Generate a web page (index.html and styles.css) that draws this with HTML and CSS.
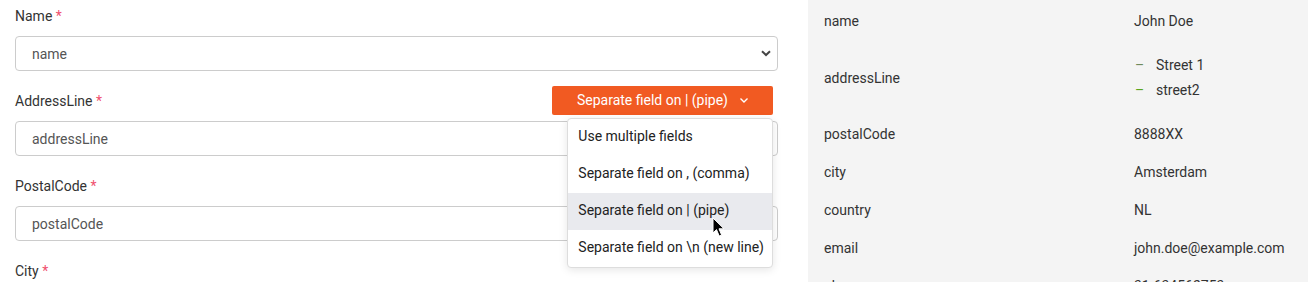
FILE: index.html
```html
<!DOCTYPE html>
<html lang="en">
<head>
    <meta charset="UTF-8">
    <meta name="viewport" content="width=device-width, initial-scale=1.0">
    <title>Address form</title>
    <link rel="stylesheet" href="styles.css">
</head>
<body>
    <div class="page">
        <form class="form-column">
            <div class="form-group">
                <div class="label-row">
                    <label for="name">Name <span class="required">*</span></label>
                </div>
                <div class="select-wrap">
                    <select id="name" class="field">
                        <option>name</option>
                    </select>
                    <svg class="select-chevron" width="10" height="7" viewBox="0 0 10 7"><path d="M1 1.2 L5 5 L9 1.2" fill="none" stroke="#444" stroke-width="2"/></svg>
                </div>
            </div>

            <div class="form-group">
                <div class="label-row">
                    <label for="addressLine">AddressLine <span class="required">*</span></label>
                    <div class="split-control">
                        <button type="button" class="split-button">
                            Separate field on | (pipe)
                            <svg width="10" height="7" viewBox="0 0 10 7"><path d="M1.5 1.5 L5 5 L8.5 1.5" fill="none" stroke="#fff" stroke-width="1.4"/></svg>
                        </button>
                        <ul class="split-menu">
                            <li>Use multiple fields</li>
                            <li>Separate field on , (comma)</li>
                            <li class="active">Separate field on | (pipe)</li>
                            <li>Separate field on \n (new line)</li>
                        </ul>
                        <svg class="cursor" width="14" height="21" viewBox="0 0 14 21"><path d="M1 1 L1 16 L4.5 12.6 L7.2 19 L9.6 18 L7 11.8 L12 11.8 Z" fill="#000" stroke="#fff" stroke-width="1"/></svg>
                    </div>
                </div>
                <input type="text" id="addressLine" class="field" value="addressLine">
            </div>

            <div class="form-group">
                <div class="label-row">
                    <label for="postalCode">PostalCode <span class="required">*</span></label>
                </div>
                <input type="text" id="postalCode" class="field" value="postalCode">
            </div>

            <div class="form-group">
                <div class="label-row">
                    <label for="city">City <span class="required">*</span></label>
                </div>
                <input type="text" id="city" class="field" value="city">
            </div>
        </form>

        <aside class="preview">
            <div class="preview-row">
                <div class="preview-key">name</div>
                <div class="preview-value">John Doe</div>
            </div>
            <div class="preview-row">
                <div class="preview-key">addressLine</div>
                <div class="preview-value">
                    <ul class="value-list">
                        <li><span class="dash dash-muted">–</span>Street 1</li>
                        <li><span class="dash">–</span>street2</li>
                    </ul>
                </div>
            </div>
            <div class="preview-row">
                <div class="preview-key">postalCode</div>
                <div class="preview-value">8888XX</div>
            </div>
            <div class="preview-row">
                <div class="preview-key">city</div>
                <div class="preview-value">Amsterdam</div>
            </div>
            <div class="preview-row">
                <div class="preview-key">country</div>
                <div class="preview-value">NL</div>
            </div>
            <div class="preview-row">
                <div class="preview-key">email</div>
                <div class="preview-value">john.doe@example.com</div>
            </div>
            <div class="preview-row">
                <div class="preview-key">phone</div>
                <div class="preview-value">31-634562753</div>
            </div>
        </aside>
    </div>
</body>
</html>
```

FILE: styles.css
```css
body {
    margin: 0;
    font-family: Roboto, "Liberation Sans", Arial, sans-serif;
    font-size: 14px;
    color: #333;
    background: #fff;
    overflow: hidden;
}
.page {
    display: grid;
    grid-template-columns: 1fr 500px;
    height: 282px;
}
.form-column {
    padding: 0 30px 0 15px;
}
.form-group {
    margin-bottom: 14px;
}
.label-row {
    display: flex;
    justify-content: space-between;
    align-items: center;
    height: 30px;
    margin-bottom: 6px;
}
label {
    line-height: 20px;
    margin-top: 2px;
    color: #333;
}
.required {
    color: #f0506e;
}
.field {
    display: block;
    box-sizing: border-box;
    width: 100%;
    height: 35px;
    padding: 0 16px;
    border: 1px solid #ccc;
    border-radius: 4px;
    background: #fff;
    font-family: inherit;
    font-size: 14px;
    color: #555;
}
.select-wrap {
    position: relative;
}
select.field {
    appearance: none;
    -webkit-appearance: none;
}
.select-chevron {
    position: absolute;
    right: 7px;
    top: 14px;
}
.split-control {
    position: relative;
    margin-right: 5px;
}
.split-button {
    display: flex;
    align-items: center;
    gap: 11px;
    height: 29px;
    padding: 0 24px 0 25px;
    border: none;
    border-radius: 2px;
    background: #f15a22;
    color: #fff;
    font-family: inherit;
    font-size: 14px;
    cursor: pointer;
}
.split-menu {
    position: absolute;
    right: 0;
    top: 32px;
    z-index: 2;
    margin: 0;
    padding: 0;
    list-style: none;
    background: #fff;
    border: 1px solid #ddd;
    border-radius: 4px;
    box-shadow: 0 2px 8px rgba(0,0,0,0.1);
    white-space: nowrap;
}
.split-menu li {
    height: 37px;
    line-height: 35px;
    padding: 0 8px 0 10px;
    color: #222;
}
.split-menu li.active {
    background: #e9eaee;
}
.cursor {
    position: absolute;
    left: 160px;
    top: 131px;
    z-index: 3;
}
.preview {
    background: #f4f4f4;
    padding: 2px 16px 0;
}
.preview-row {
    display: grid;
    grid-template-columns: 310px 1fr;
    align-items: center;
}
.preview-key,
.preview-value {
    padding: 9px 0;
    line-height: 20px;
    color: #333;
}
.value-list {
    list-style: none;
    margin: 0;
    padding: 4px 0 3px;
}
.value-list li {
    line-height: 25px;
}
.dash {
    display: inline-block;
    width: 22px;
    padding-left: 1px;
    box-sizing: border-box;
    color: #5aa51e;
}
.dash-muted {
    color: #6f8a5c;
}
```
